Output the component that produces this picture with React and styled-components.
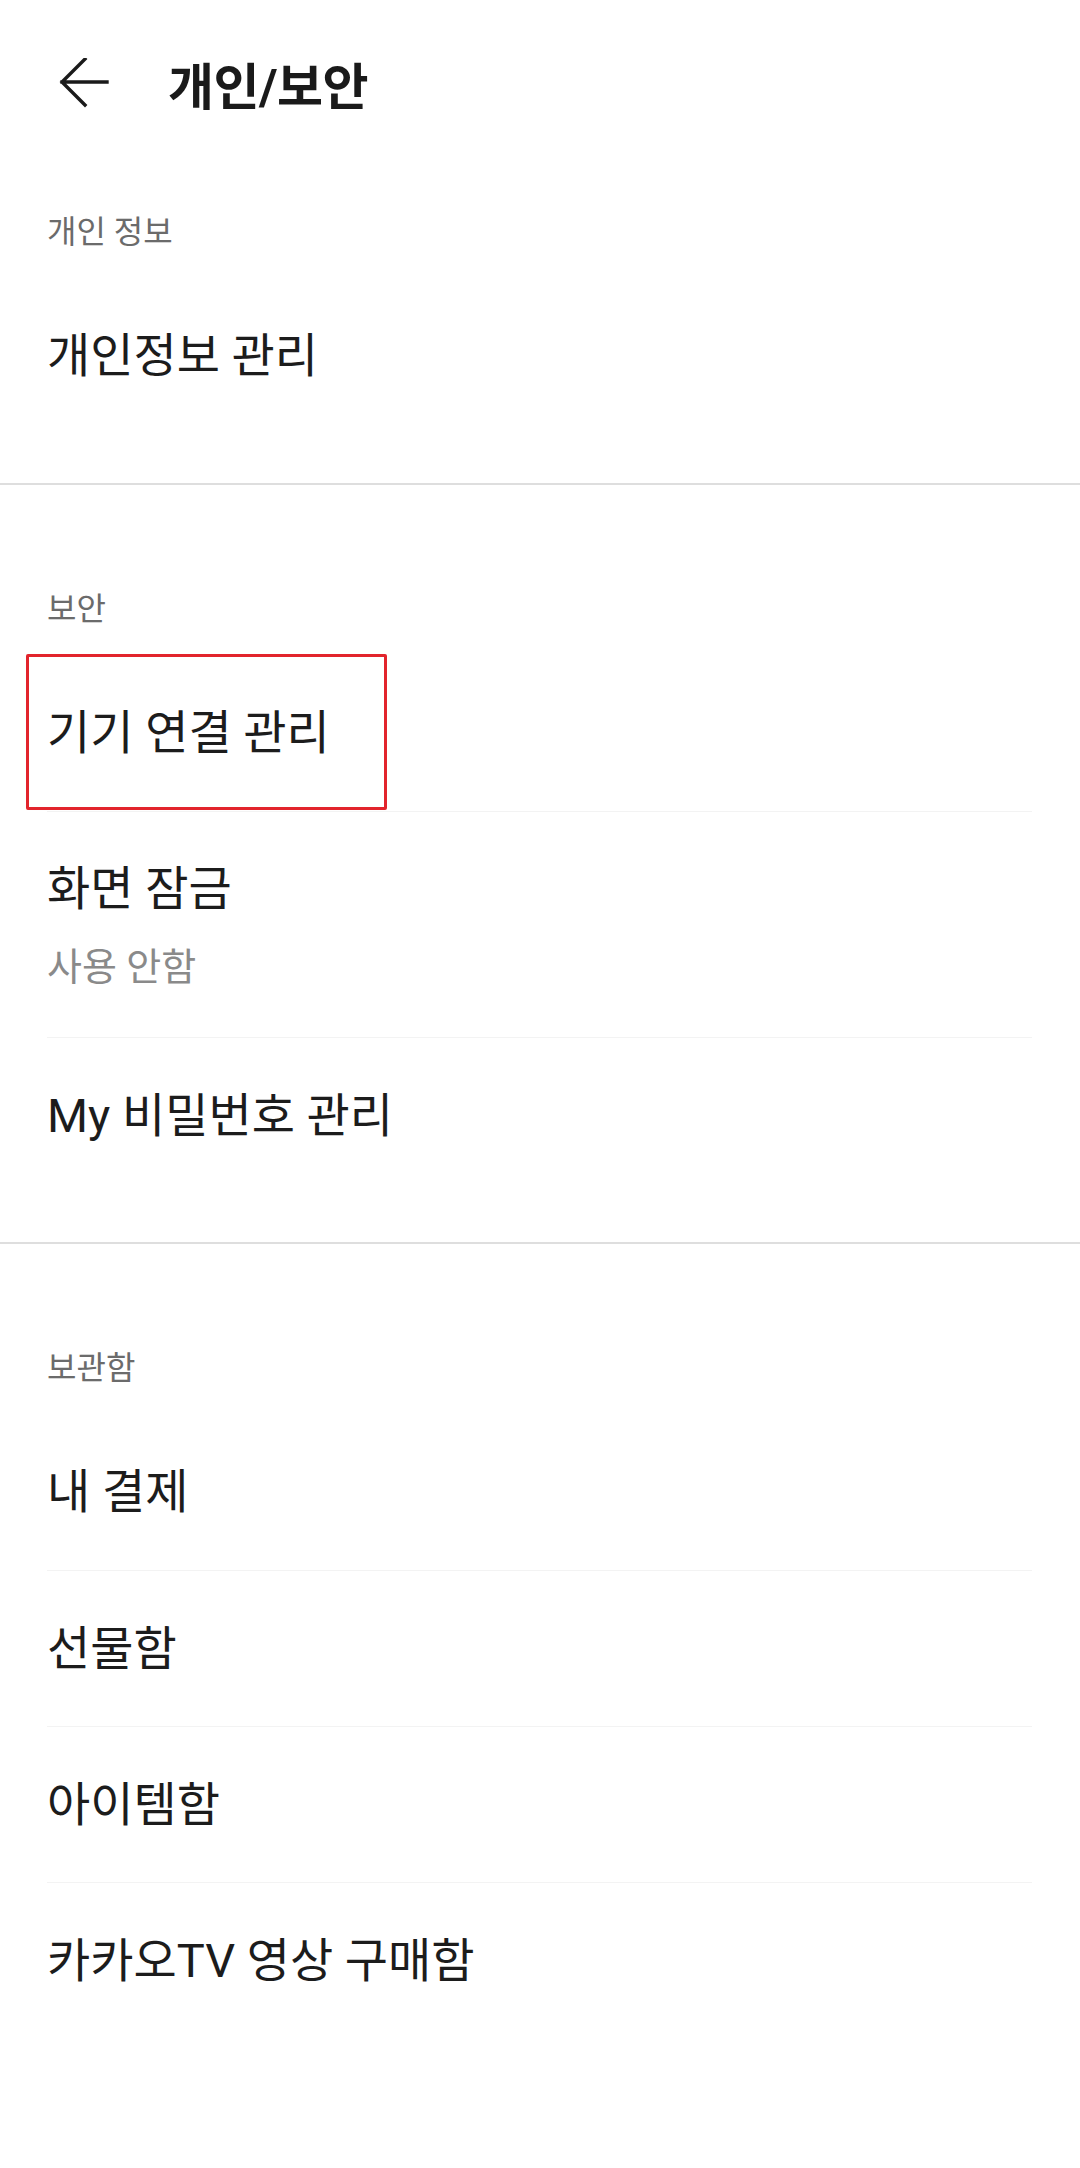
import React from "react";
import styled, { createGlobalStyle } from "styled-components";

const GlobalStyle = createGlobalStyle`
  body {
    margin: 0;
    background: #ffffff;
    font-family: "Roboto", "Noto Sans CJK KR", sans-serif;
    -webkit-font-smoothing: antialiased;
  }
`;

const Page = styled.div`
  width: 1080px;
  min-height: 2168px;
  background: #ffffff;
`;

const Header = styled.header`
  height: 166px;
  display: flex;
  align-items: center;
  padding-left: 59px;
  gap: 59px;
  margin-bottom: 2px;
`;

const BackButton = styled.button`
  width: 50px;
  height: 50px;
  padding: 0;
  border: none;
  background: none;
  display: flex;
  cursor: pointer;
`;

const Title = styled.h1`
  margin: 0;
  font-size: 50px;
  font-weight: 700;
  color: #1a1a1a;
  letter-spacing: -0.5px;
`;

const Section = styled.section`
  padding: ${(p) => (p.$first ? "12px" : "72px")} 48px 49px 47px;
`;

const Divider = styled.div`
  height: 2px;
  background: #dedede;
`;

const Label = styled.div`
  height: 98px;
  display: flex;
  align-items: center;
  font-size: 32px;
  color: #6b6b6b;
`;

const Row = styled.div`
  position: relative;
  box-sizing: border-box;
  min-height: 156px;
  display: flex;
  flex-direction: column;
  justify-content: center;
  gap: 28px;
  border-top: ${(p) => (p.$first ? "none" : "1px solid #f3f3f3")};
  padding: ${(p) => (p.$sub ? "47px 0 50px" : "0")};
`;

const ItemTitle = styled.div`
  font-size: 47px;
  color: #1c1c1c;
  line-height: 60px;
`;

const ItemSub = styled.div`
  font-size: 38px;
  color: #8a8a8a;
  line-height: 40px;
`;

const Highlight = styled.div`
  position: absolute;
  top: -1px;
  left: -21px;
  width: 361px;
  height: 156px;
  box-sizing: border-box;
  border: 3px solid #e2242c;
  border-radius: 2px;
  pointer-events: none;
`;

const ArrowIcon = () => (
  <svg width="50" height="50" viewBox="0 0 50 50" fill="none">
    <path
      d="M48 24 H3 M26 1 L3 24 L26 47"
      stroke="#1a1a1a"
      strokeWidth="3.4"
      strokeLinecap="square"
      strokeLinejoin="miter"
    />
  </svg>
);

const sections = [
  {
    label: "개인 정보",
    items: [{ title: "개인정보 관리" }],
  },
  {
    label: "보안",
    items: [
      { title: "기기 연결 관리", marked: true },
      { title: "화면 잠금", sub: "사용 안함" },
      { title: "My 비밀번호 관리" },
    ],
  },
  {
    label: "보관함",
    items: [
      { title: "내 결제" },
      { title: "선물함" },
      { title: "아이템함" },
      { title: "카카오TV 영상 구매함" },
    ],
  },
];

const App = () => {
  return (
    <Page>
      <GlobalStyle />
      <Header>
        <BackButton aria-label="뒤로">
          <ArrowIcon />
        </BackButton>
        <Title>개인/보안</Title>
      </Header>
      {sections.map((section, i) => (
        <React.Fragment key={section.label}>
          {i > 0 && <Divider />}
          <Section $first={i === 0}>
            <Label>{section.label}</Label>
            {section.items.map((item, j) => (
              <Row key={item.title} $first={j === 0} $sub={!!item.sub}>
                <ItemTitle>{item.title}</ItemTitle>
                {item.sub && <ItemSub>{item.sub}</ItemSub>}
                {item.marked && <Highlight />}
              </Row>
            ))}
          </Section>
        </React.Fragment>
      ))}
    </Page>
  );
};

export default App;
